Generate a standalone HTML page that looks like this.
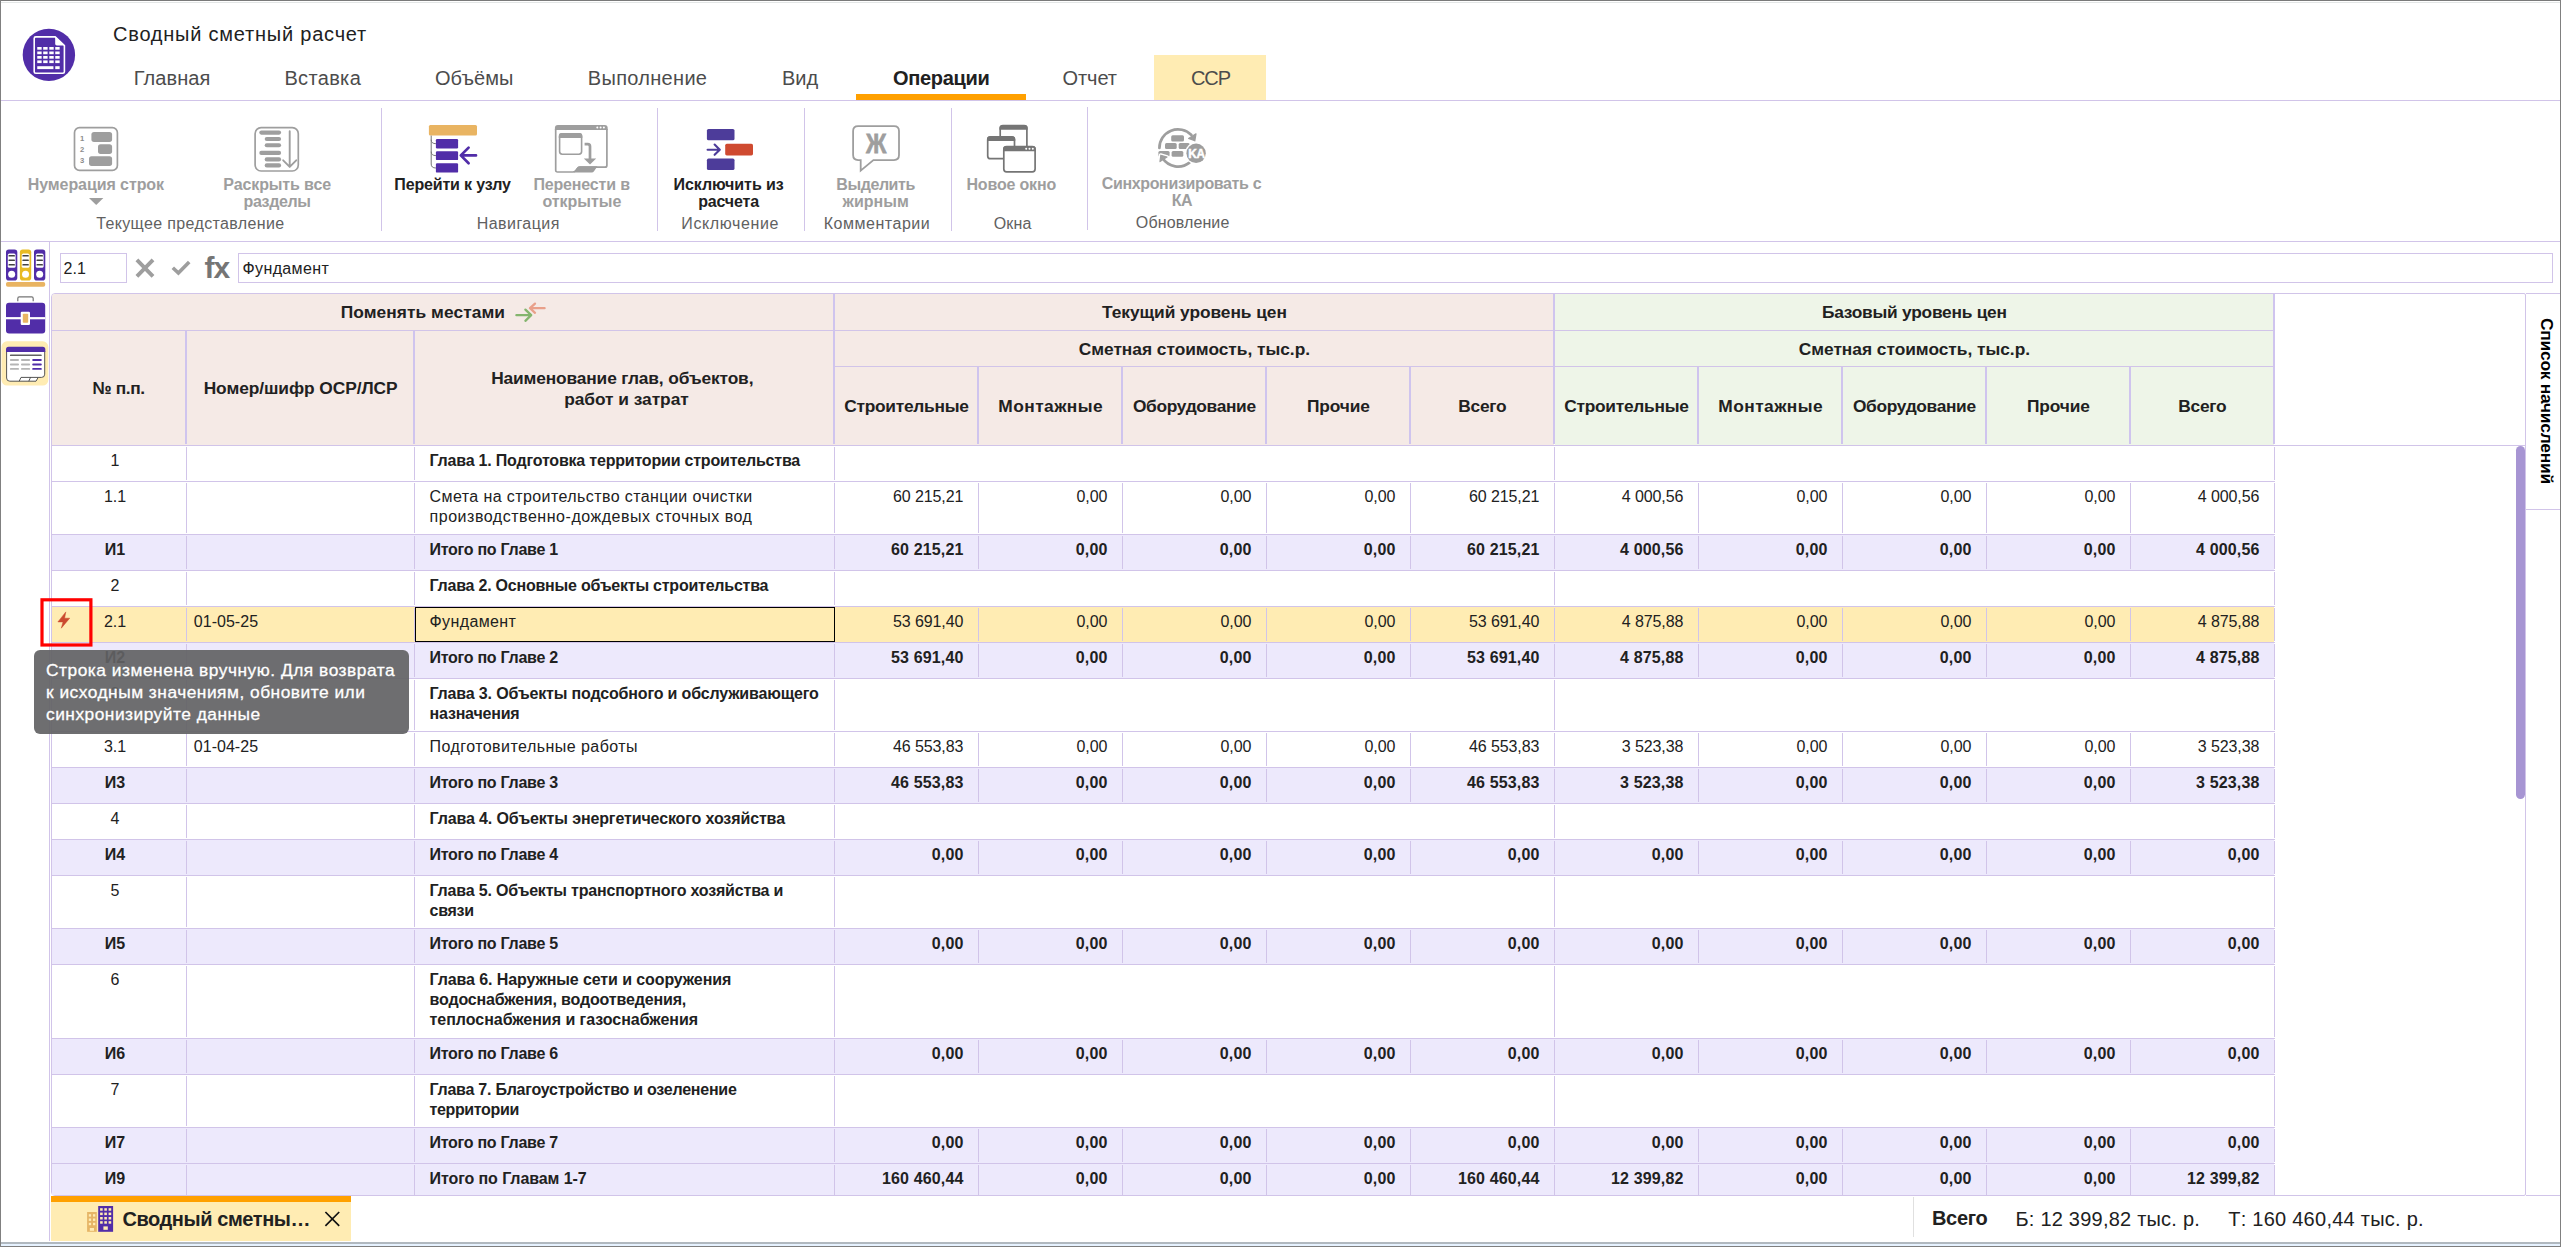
<!DOCTYPE html>
<html lang="ru"><head><meta charset="utf-8"><title>Сводный сметный расчет</title>
<style>
html,body{margin:0;padding:0;background:#fff;}
body{width:2561px;height:1247px;position:relative;overflow:hidden;font-family:"Liberation Sans",sans-serif;color:#212121;}
.b{position:absolute;box-sizing:border-box;display:block;}
.t{position:absolute;white-space:pre;display:block;}
</style></head><body>
<div class="b" style="left:0px;top:0px;width:2561px;height:1px;background:#7a7a7a;"></div>
<div class="b" style="left:0px;top:2px;width:2561px;height:1px;background:#e3e6e6;"></div>
<div class="b" style="left:0px;top:1242px;width:2561px;height:2px;background:#b0b8bf;"></div>
<div class="b" style="left:0px;top:1244px;width:2561px;height:2px;background:#e6f2ff;"></div>
<div class="b" style="left:0px;top:1246px;width:2561px;height:1px;background:#7f7f7f;"></div>
<div class="b" style="left:0px;top:0px;width:1px;height:1247px;background:#808080;"></div>
<div class="b" style="left:2560px;top:0px;width:1px;height:1247px;background:#808080;"></div>
<svg class="b" style="left:21.8px;top:28px;" width="54" height="54" viewBox="0 0 54 54"><circle cx="26.9" cy="26.9" r="26.2" fill="#512da8"/>
<path d="M13.8 8.9 h19.4 l9.2 8.6 v26.2 a1.6 1.6 0 0 1 -1.6 1.6 h-27 a1.6 1.6 0 0 1 -1.6 -1.6 v-33.2 a1.6 1.6 0 0 1 1.6 -1.6 z" fill="#512da8" stroke="#fff" stroke-width="1.6" stroke-linejoin="round"/>
<path d="M33.2 8.4 v7.4 a1.6 1.6 0 0 0 1.6 1.6 h8 z" fill="#fff"/>
<rect x="15.25" y="19.0" width="4.4" height="2.7" fill="#fff"/><rect x="21.2" y="19.0" width="4.4" height="2.7" fill="#fff"/><rect x="27.3" y="19.0" width="4.4" height="2.7" fill="#fff"/><rect x="33.25" y="19.0" width="4.4" height="2.7" fill="#fff"/><rect x="15.25" y="23.5" width="4.4" height="2.7" fill="#fff"/><rect x="21.2" y="23.5" width="4.4" height="2.7" fill="#fff"/><rect x="27.3" y="23.5" width="4.4" height="2.7" fill="#fff"/><rect x="33.25" y="23.5" width="4.4" height="2.7" fill="#fff"/><rect x="15.25" y="28.0" width="4.4" height="2.7" fill="#fff"/><rect x="21.2" y="28.0" width="4.4" height="2.7" fill="#fff"/><rect x="27.3" y="28.0" width="4.4" height="2.7" fill="#fff"/><rect x="33.25" y="28.0" width="4.4" height="2.7" fill="#fff"/><rect x="15.25" y="32.4" width="4.4" height="2.7" fill="#fff"/><rect x="21.2" y="32.4" width="4.4" height="2.7" fill="#fff"/><rect x="27.3" y="32.4" width="4.4" height="2.7" fill="#fff"/><rect x="33.25" y="32.4" width="4.4" height="2.7" fill="#fff"/><rect x="15.25" y="38.2" width="16.2" height="2.9" fill="#fff"/><rect x="33.25" y="38.2" width="4.4" height="2.9" fill="#fff"/></svg>
<span class="t" style="left:113.00px;top:22px;font-size:20px;line-height:25px;letter-spacing:0.776px;">Сводный сметный расчет</span>
<div class="b" style="left:1154px;top:55px;width:112px;height:45px;background:#ffecb3;"></div>
<div class="b" style="left:856px;top:94px;width:170px;height:6px;background:#ffa000;"></div>
<span class="t" style="left:133.70px;top:66px;font-size:20px;line-height:25px;color:#4c4c4c;letter-spacing:0.096px;">Главная</span>
<span class="t" style="left:284.40px;top:66px;font-size:20px;line-height:25px;color:#4c4c4c;letter-spacing:0.337px;">Вставка</span>
<span class="t" style="left:434.90px;top:66px;font-size:20px;line-height:25px;color:#4c4c4c;letter-spacing:0.098px;">Объёмы</span>
<span class="t" style="left:587.80px;top:66px;font-size:20px;line-height:25px;color:#4c4c4c;letter-spacing:0.309px;">Выполнение</span>
<span class="t" style="left:782.00px;top:66px;font-size:20px;line-height:25px;color:#4c4c4c;letter-spacing:0.004px;">Вид</span>
<span class="t" style="left:892.90px;top:66px;font-size:20px;line-height:25px;font-weight:700;letter-spacing:-0.286px;">Операции</span>
<span class="t" style="left:1062.40px;top:66px;font-size:20px;line-height:25px;color:#4c4c4c;letter-spacing:-0.033px;">Отчет</span>
<span class="t" style="left:1191.00px;top:66px;font-size:20px;line-height:25px;color:#4c4c4c;letter-spacing:-1.078px;">ССР</span>
<div class="b" style="left:1px;top:100px;width:2559px;height:1px;background:#d1c4e9;"></div>
<svg class="b" style="left:0px;top:100px;" width="1300" height="145" viewBox="0 100 1300 145"><rect x="74.5" y="127.7" width="42.9" height="42.7" rx="5" fill="none" stroke="#9e9e9e" stroke-width="1.7"/><rect x="91.4" y="132" width="20.7" height="9.9" rx="2.6" fill="#9e9e9e"/><rect x="98" y="144.2" width="14.1" height="9.7" rx="2.6" fill="#9e9e9e"/><rect x="89" y="156.2" width="23.1" height="9.7" rx="2.6" fill="#9e9e9e"/><text x="82" y="140.9" font-size="7.6" font-weight="700" text-anchor="middle" fill="#8c8c8c" font-family="Liberation Sans, sans-serif">1</text><text x="82" y="152" font-size="7.6" font-weight="700" text-anchor="middle" fill="#8c8c8c" font-family="Liberation Sans, sans-serif">2</text><text x="82" y="163.3" font-size="7.6" font-weight="700" text-anchor="middle" fill="#8c8c8c" font-family="Liberation Sans, sans-serif">3</text><rect x="255.1" y="127.7" width="43.2" height="43.3" rx="6" fill="none" stroke="#9e9e9e" stroke-width="1.7"/><rect x="259.3" y="130.54999999999998" width="21.8" height="4.1" rx="2.05" fill="#9e9e9e"/><rect x="264.7" y="136.95" width="16.4" height="4.1" rx="2.05" fill="#9e9e9e"/><rect x="264.7" y="143.25" width="16.4" height="4.1" rx="2.05" fill="#9e9e9e"/><rect x="259.3" y="150.85" width="21.8" height="4.1" rx="2.05" fill="#9e9e9e"/><rect x="264.7" y="157.35" width="16.4" height="4.1" rx="2.05" fill="#9e9e9e"/><rect x="264.7" y="163.35" width="16.4" height="4.1" rx="2.05" fill="#9e9e9e"/><path d="M289.7 131.2 V166.6 M283.2 160.3 L289.7 166.9 L296.2 160.3" fill="none" stroke="#9e9e9e" stroke-width="1.9" stroke-linecap="round" stroke-linejoin="round"/><rect x="428.9" y="125" width="48.1" height="10.6" rx="1.5" fill="#e9b462"/><path d="M431.2 135.6 V164 Q431.2 168 435.9 168 M431.2 139.7 Q431.2 143.7 435.9 143.7 M431.2 151.6 Q431.2 155.6 435.9 155.6" fill="none" stroke="#757575" stroke-width="1"/><rect x="435.9" y="139" width="22.2" height="9.4" rx="1.2" fill="#512da8"/><rect x="435.9" y="151.2" width="22.2" height="8.9" rx="1.2" fill="#512da8"/><rect x="435.9" y="163.3" width="22.2" height="9.3" rx="1.2" fill="#512da8"/><path d="M462 155.4 H476 M468.6 147.6 L460.8 155.4 L468.6 163.2" fill="none" stroke="#512da8" stroke-width="2.7" stroke-linecap="round" stroke-linejoin="round"/><path d="M555.7 129 V170 Q555.6 172 557.6 172 H573 Q575 172 576 170.6 L577.4 168.6 Q578.4 167.2 580.4 167.2 H605 Q606.9 167.2 606.9 165.2 V129" fill="none" stroke="#9e9e9e" stroke-width="1.7"/><path d="M554.9 129.9 V128 Q554.9 125 557.9 125 H604.7 Q607.7 125 607.7 128 V129.9 Z" fill="#9e9e9e"/><circle cx="597.3" cy="127.6" r="1" fill="#fff"/><circle cx="600.6" cy="127.6" r="1" fill="#fff"/><circle cx="603.9" cy="127.6" r="1" fill="#fff"/><path d="M573.5 172.4 L577.6 167 Q578.2 166.3 579.2 166.3 H597.5 L594 171.2 Q593.2 172.4 591.8 172.4 Z" fill="#9e9e9e"/><rect x="559.6" y="133.9" width="22" height="20.3" rx="2.6" fill="none" stroke="#9e9e9e" stroke-width="1.6"/><path d="M558.8 138 V136 Q558.8 133.1 561.7 133.1 H579.4 Q582.3 133.1 582.3 136 V138 Z" fill="#9e9e9e"/><path d="M584.6 144.2 H587.8 Q590 144.2 590 146.4 V159" fill="none" stroke="#9e9e9e" stroke-width="2.7"/><path d="M583.8 158.6 H596.2 L590 164.6 Z" fill="#9e9e9e"/><rect x="706.9" y="128.9" width="27.6" height="11.4" rx="1.6" fill="#4d3c9a"/><rect x="706.9" y="158.6" width="27.6" height="11.4" rx="1.6" fill="#4d3c9a"/><rect x="725.2" y="143.7" width="27.8" height="11.7" rx="1.6" fill="#cf4a30"/><path d="M707.6 149.7 H719 M714.6 144.6 L719.8 149.7 L714.6 154.8" fill="none" stroke="#4d3c9a" stroke-width="2.1" stroke-linecap="round" stroke-linejoin="round"/><path d="M858.1 126.1 H894 Q899 126.1 899 131.1 V155.1 Q899 160.1 894 160.1 H873.4 L860.7 170.6 V160.1 H858.1 Q853.1 160.1 853.1 155.1 V131.1 Q853.1 126.1 858.1 126.1 Z" fill="none" stroke="#9e9e9e" stroke-width="1.8" stroke-linejoin="miter"/><text transform="translate(876.1 152.8) scale(0.9 1.08)" x="0" y="0" font-size="25" font-weight="700" text-anchor="middle" fill="#9e9e9e" stroke="#9e9e9e" stroke-width="0.7" font-family="Liberation Sans, sans-serif">Ж</text><rect x="1000.2" y="125.7" width="26.7" height="23.6" rx="2.8" fill="#fff" stroke="#757575" stroke-width="1.7"/><path d="M999.5 129.8 V128 Q999.5 125 1002.5 125 H1024.6 Q1027.6 125 1027.6 128 V129.8 Z" fill="#757575"/><rect x="987.7" y="136.89999999999998" width="26.8" height="21.8" rx="2.8" fill="#fff" stroke="#757575" stroke-width="1.7"/><path d="M987 141 V139.2 Q987 136.2 990 136.2 H1012.2 Q1015.2 136.2 1015.2 139.2 V141 Z" fill="#757575"/><rect x="1003.8000000000001" y="146.7" width="31.3" height="25.2" rx="2.8" fill="#fff" stroke="#757575" stroke-width="1.7"/><path d="M1003.1 151.2 V149 Q1003.1 146 1006.1 146 H1032.8 Q1035.8 146 1035.8 149 V151.2 Z" fill="#757575"/><circle cx="1026.2" cy="148.7" r="1" fill="#fff"/><circle cx="1029.5" cy="148.7" r="1" fill="#fff"/><circle cx="1032.8" cy="148.7" r="1" fill="#fff"/><rect x="1171.2" y="135.2" width="12.8" height="6.2" rx="1.5" fill="#9e9e9e"/><rect x="1165" y="143.1" width="11.7" height="6.0" rx="1.5" fill="#9e9e9e"/><rect x="1178.7" y="143.1" width="11.0" height="6.0" rx="1.5" fill="#9e9e9e"/><rect x="1171.6" y="151.1" width="11.7" height="5.7" rx="1.5" fill="#9e9e9e"/><rect x="1158.4" y="150.9" width="11.2" height="5.7" rx="1.5" fill="#9e9e9e"/><path d="M1159.4 147.9 A18.6 18.6 0 0 1 1191.4 135.0" fill="none" stroke="#9e9e9e" stroke-width="2.7" stroke-linecap="round"/><path d="M1188.6 138.4 L1196 133.8 L1194.8 140.8 Z" fill="#9e9e9e" stroke="#9e9e9e" stroke-width="1.2" stroke-linejoin="round"/><path d="M1160.6 155 L1167.2 157 L1159.9 161.8 Z" fill="#fff" stroke="#fff" stroke-width="3.6" stroke-linejoin="round"/><path d="M1189.5 162.6 A18.6 18.6 0 0 1 1162.6 158.3" fill="none" stroke="#9e9e9e" stroke-width="2.7" stroke-linecap="round"/><path d="M1160.8 155.2 L1167 157.1 L1160 161.6 Z" fill="#9e9e9e" stroke="#9e9e9e" stroke-width="1.2" stroke-linejoin="round"/><circle cx="1196.1" cy="153.3" r="11" fill="#fff"/><circle cx="1196.1" cy="153.3" r="9.7" fill="#9e9e9e"/><text x="1196.4" y="157.5" font-size="11.9" font-weight="700" text-anchor="middle" fill="#fff" stroke="#fff" stroke-width="0.45" font-family="Liberation Sans, sans-serif" letter-spacing="-0.5">KA</text><path d="M89 198 H103.4 L96.2 205 Z" fill="#9e9e9e"/></svg>
<span class="t" style="left:27.76px;top:175px;font-size:16px;line-height:20px;font-weight:700;color:#9e9e9e;letter-spacing:-0.079px;">Нумерация строк</span>
<span class="t" style="left:223.34px;top:175px;font-size:16px;line-height:20px;font-weight:700;color:#9e9e9e;letter-spacing:-0.114px;">Раскрыть все</span>
<span class="t" style="left:243.51px;top:192px;font-size:16px;line-height:20px;font-weight:700;color:#9e9e9e;letter-spacing:-0.372px;">разделы</span>
<span class="t" style="left:96.18px;top:214px;font-size:16px;line-height:20px;color:#616161;letter-spacing:0.361px;">Текущее представление</span>
<span class="t" style="left:394.32px;top:175px;font-size:16px;line-height:20px;font-weight:700;letter-spacing:-0.162px;">Перейти к узлу</span>
<span class="t" style="left:533.41px;top:175px;font-size:16px;line-height:20px;font-weight:700;color:#9e9e9e;letter-spacing:-0.171px;">Перенести в</span>
<span class="t" style="left:542.39px;top:192px;font-size:16px;line-height:20px;font-weight:700;color:#9e9e9e;letter-spacing:-0.020px;">открытые</span>
<span class="t" style="left:476.73px;top:214px;font-size:16px;line-height:20px;color:#616161;letter-spacing:0.450px;">Навигация</span>
<span class="t" style="left:673.57px;top:175px;font-size:16px;line-height:20px;font-weight:700;letter-spacing:-0.055px;">Исключить из</span>
<span class="t" style="left:698.13px;top:192px;font-size:16px;line-height:20px;font-weight:700;letter-spacing:-0.139px;">расчета</span>
<span class="t" style="left:681.31px;top:214px;font-size:16px;line-height:20px;color:#616161;letter-spacing:0.612px;">Исключение</span>
<span class="t" style="left:836.29px;top:175px;font-size:16px;line-height:20px;font-weight:700;color:#9e9e9e;letter-spacing:-0.419px;">Выделить</span>
<span class="t" style="left:842.52px;top:192px;font-size:16px;line-height:20px;font-weight:700;color:#9e9e9e;letter-spacing:0.046px;">жирным</span>
<span class="t" style="left:823.66px;top:214px;font-size:16px;line-height:20px;color:#616161;letter-spacing:0.529px;">Комментарии</span>
<span class="t" style="left:966.51px;top:175px;font-size:16px;line-height:20px;font-weight:700;color:#9e9e9e;letter-spacing:-0.180px;">Новое окно</span>
<span class="t" style="left:993.78px;top:214px;font-size:16px;line-height:20px;color:#616161;letter-spacing:0.153px;">Окна</span>
<span class="t" style="left:1101.72px;top:174px;font-size:16px;line-height:20px;font-weight:700;color:#9e9e9e;letter-spacing:-0.354px;">Синхронизировать с</span>
<span class="t" style="left:1171.64px;top:191px;font-size:16px;line-height:20px;font-weight:700;color:#9e9e9e;letter-spacing:-0.514px;">КА</span>
<span class="t" style="left:1135.86px;top:213px;font-size:16px;line-height:20px;color:#616161;letter-spacing:0.121px;">Обновление</span>
<div class="b" style="left:381px;top:108px;width:1px;height:123px;background:#d1c4e9;"></div>
<div class="b" style="left:657px;top:108px;width:1px;height:123px;background:#d1c4e9;"></div>
<div class="b" style="left:804px;top:108px;width:1px;height:123px;background:#d1c4e9;"></div>
<div class="b" style="left:951px;top:108px;width:1px;height:123px;background:#d1c4e9;"></div>
<div class="b" style="left:1087px;top:107px;width:1px;height:123px;background:#d1c4e9;"></div>
<div class="b" style="left:1px;top:241px;width:2559px;height:1px;background:#d1c4e9;"></div>
<div class="b" style="left:49px;top:242px;width:1px;height:999px;background:#d1c4e9;"></div>
<svg class="b" style="left:0px;top:242px;" width="50" height="150" viewBox="0 242 50 150"><rect x="6.0" y="249.4" width="11.3" height="31.2" rx="2.8" fill="#512da8"/><rect x="7.8" y="253.4" width="7.8" height="14.4" rx="1.6" fill="#fff"/><rect x="8.5" y="255.0" width="6.4" height="1.6" rx="0.4" fill="#424242"/><rect x="8.5" y="259.5" width="6.4" height="1.6" rx="0.4" fill="#424242"/><rect x="8.5" y="264.0" width="6.4" height="1.6" rx="0.4" fill="#424242"/><circle cx="11.65" cy="274.3" r="3.5" fill="#fff"/><rect x="19.9" y="249.4" width="11.3" height="31.2" rx="2.8" fill="#e8bb24"/><rect x="21.7" y="253.4" width="7.8" height="14.4" rx="1.6" fill="#fff"/><rect x="22.4" y="255.0" width="6.4" height="1.6" rx="0.4" fill="#424242"/><rect x="22.4" y="259.5" width="6.4" height="1.6" rx="0.4" fill="#424242"/><rect x="22.4" y="264.0" width="6.4" height="1.6" rx="0.4" fill="#424242"/><circle cx="25.549999999999997" cy="274.3" r="3.5" fill="#fff"/><rect x="34.0" y="249.4" width="11.3" height="31.2" rx="2.8" fill="#512da8"/><rect x="35.8" y="253.4" width="7.8" height="14.4" rx="1.6" fill="#fff"/><rect x="36.5" y="255.0" width="6.4" height="1.6" rx="0.4" fill="#424242"/><rect x="36.5" y="259.5" width="6.4" height="1.6" rx="0.4" fill="#424242"/><rect x="36.5" y="264.0" width="6.4" height="1.6" rx="0.4" fill="#424242"/><circle cx="39.65" cy="274.3" r="3.5" fill="#fff"/><rect x="6" y="282" width="39.2" height="4.8" rx="1.8" fill="#e9b462"/><path d="M17.8 301.2 V298.4 Q17.8 296.9 19.3 296.9 H31.7 Q33.2 296.9 33.2 298.4 V301.2" fill="none" stroke="#757575" stroke-width="1.2"/><rect x="6" y="302.7" width="39.2" height="30.9" rx="3" fill="#512da8"/><rect x="6" y="317.1" width="39.2" height="2.2" fill="#fff"/><rect x="20.7" y="311.7" width="9.3" height="13.3" rx="1.2" fill="#fff"/><rect x="22.8" y="313.8" width="5.4" height="9" rx="0.8" fill="#e9b462"/><rect x="1.5" y="341.3" width="46.8" height="44.2" rx="5.5" fill="#ffecb3"/><path d="M6.6 351 V378 Q6.6 381.2 9.8 381.2 H36 L38.2 377.4 H41.6 Q44.7 377.4 44.7 374.2 V351 Z" fill="#fff" stroke="#424242" stroke-width="0.9" stroke-linejoin="round"/><path d="M19.2 381.2 L21 377.4 H38.2 M28.8 381.2 L30.5 377.4" fill="none" stroke="#424242" stroke-width="0.9"/><path d="M6 352 V349.4 Q6 346.8 8.6 346.8 H42.7 Q45.3 346.8 45.3 349.4 V352 Z" fill="#512da8"/><rect x="9.9" y="354.4" width="31.9" height="1.7" rx="0.85" fill="#616161"/><rect x="9.9" y="359.1" width="9.1" height="1.9" rx="0.9" fill="#b5b5b5"/><rect x="21" y="359.1" width="9.1" height="1.9" rx="0.9" fill="#b5b5b5"/><rect x="32.2" y="359.1" width="9.6" height="1.9" rx="0.9" fill="#512da8"/><rect x="9.9" y="363.5" width="9.1" height="1.9" rx="0.9" fill="#b5b5b5"/><rect x="21" y="363.5" width="9.1" height="1.9" rx="0.9" fill="#b5b5b5"/><rect x="32.2" y="363.5" width="9.6" height="1.9" rx="0.9" fill="#512da8"/><rect x="9.9" y="367.9" width="9.1" height="1.9" rx="0.9" fill="#b5b5b5"/><rect x="21" y="367.9" width="9.1" height="1.9" rx="0.9" fill="#b5b5b5"/><rect x="32.2" y="367.9" width="9.6" height="1.9" rx="0.9" fill="#512da8"/></svg>
<div class="b" style="left:60px;top:253px;width:67px;height:30px;border:1px solid #d1c4e9;"></div>
<div class="b" style="left:238px;top:253px;width:2315px;height:30px;border:1px solid #d1c4e9;"></div>
<span class="t" style="left:63.60px;top:259px;font-size:16px;line-height:20px;">2.1</span>
<span class="t" style="left:242.50px;top:259px;font-size:16px;line-height:20px;letter-spacing:0.378px;">Фундамент</span>
<svg class="b" style="left:130px;top:250px;" width="110" height="36" viewBox="130 250 110 36"><path d="M136.9 259.9 L153 276.4 M153 259.9 L136.9 276.4" stroke="#9e9e9e" stroke-width="3.9" fill="none"/><path d="M172.8 267.8 L178.4 273 L189.2 262" stroke="#9e9e9e" stroke-width="3.6" fill="none"/></svg>
<span class="t" style="left:204.60px;top:249px;font-size:30px;line-height:38px;font-weight:700;color:#757575;letter-spacing:-1.144px;">fx</span>
<div class="b" style="left:51px;top:293px;width:2475px;height:903px;border:1px solid #d1c4e9;border-radius:4px 2px 2px 4px;"></div>
<div class="b" style="left:0;top:0;width:2561px;height:1247px;"><div class="b" style="left:52px;top:294px;width:1502px;height:151px;background:#f5eae6;border-top-left-radius:3px;"></div><div class="b" style="left:1555px;top:294px;width:719px;height:151px;background:#eef5e8;"></div><div class="b" style="left:52px;top:330px;width:2223px;height:1px;background:#d1c4e9;"></div><div class="b" style="left:834px;top:366px;width:1441px;height:1px;background:#d1c4e9;"></div><div class="b" style="left:185px;top:331px;width:2px;height:113px;background:#cfc4ee;"></div><div class="b" style="left:413px;top:331px;width:2px;height:113px;background:#cfc4ee;"></div><div class="b" style="left:833px;top:294px;width:2px;height:150px;background:#cfc4ee;"></div><div class="b" style="left:1553px;top:294px;width:2px;height:150px;background:#cfc4ee;"></div><div class="b" style="left:2273px;top:294px;width:2px;height:150px;background:#cfc4ee;"></div><div class="b" style="left:977px;top:367px;width:2px;height:77px;background:#cfc4ee;"></div><div class="b" style="left:1121px;top:367px;width:2px;height:77px;background:#cfc4ee;"></div><div class="b" style="left:1265px;top:367px;width:2px;height:77px;background:#cfc4ee;"></div><div class="b" style="left:1409px;top:367px;width:2px;height:77px;background:#cfc4ee;"></div><div class="b" style="left:1697px;top:367px;width:2px;height:77px;background:#cfc4ee;"></div><div class="b" style="left:1841px;top:367px;width:2px;height:77px;background:#cfc4ee;"></div><div class="b" style="left:1985px;top:367px;width:2px;height:77px;background:#cfc4ee;"></div><div class="b" style="left:2129px;top:367px;width:2px;height:77px;background:#cfc4ee;"></div><div class="b" style="left:52px;top:445px;width:2473px;height:1px;background:#d1c4e9;"></div><span class="t" style="left:340.80px;top:301px;font-size:17.33px;line-height:22px;font-weight:700;letter-spacing:0.058px;">Поменять местами</span><span class="t" style="left:1102.12px;top:301px;font-size:17.33px;line-height:22px;font-weight:700;letter-spacing:-0.055px;">Текущий уровень цен</span><span class="t" style="left:1822.03px;top:301px;font-size:17.33px;line-height:22px;font-weight:700;letter-spacing:-0.244px;">Базовый уровень цен</span><span class="t" style="left:1078.74px;top:338px;font-size:17.33px;line-height:22px;font-weight:700;letter-spacing:-0.025px;">Сметная стоимость, тыс.р.</span><span class="t" style="left:1798.74px;top:338px;font-size:17.33px;line-height:22px;font-weight:700;letter-spacing:-0.025px;">Сметная стоимость, тыс.р.</span><span class="t" style="left:844.17px;top:395px;font-size:17.33px;line-height:22px;font-weight:700;letter-spacing:-0.260px;">Строительные</span><span class="t" style="left:998.37px;top:395px;font-size:17.33px;line-height:22px;font-weight:700;letter-spacing:0.434px;">Монтажные</span><span class="t" style="left:1132.94px;top:395px;font-size:17.33px;line-height:22px;font-weight:700;letter-spacing:-0.328px;">Оборудование</span><span class="t" style="left:1307.04px;top:395px;font-size:17.33px;line-height:22px;font-weight:700;letter-spacing:-0.124px;">Прочие</span><span class="t" style="left:1458.32px;top:395px;font-size:17.33px;line-height:22px;font-weight:700;letter-spacing:-0.255px;">Всего</span><span class="t" style="left:1564.17px;top:395px;font-size:17.33px;line-height:22px;font-weight:700;letter-spacing:-0.260px;">Строительные</span><span class="t" style="left:1718.37px;top:395px;font-size:17.33px;line-height:22px;font-weight:700;letter-spacing:0.434px;">Монтажные</span><span class="t" style="left:1852.94px;top:395px;font-size:17.33px;line-height:22px;font-weight:700;letter-spacing:-0.328px;">Оборудование</span><span class="t" style="left:2027.04px;top:395px;font-size:17.33px;line-height:22px;font-weight:700;letter-spacing:-0.124px;">Прочие</span><span class="t" style="left:2178.32px;top:395px;font-size:17.33px;line-height:22px;font-weight:700;letter-spacing:-0.255px;">Всего</span><span class="t" style="left:92.57px;top:377px;font-size:17.33px;line-height:22px;font-weight:700;letter-spacing:-0.451px;">№ п.п.</span><span class="t" style="left:203.67px;top:377px;font-size:17.33px;line-height:22px;font-weight:700;letter-spacing:-0.066px;">Номер/шифр ОСР/ЛСР</span><span class="t" style="left:491.13px;top:367px;font-size:17.33px;line-height:22px;font-weight:700;letter-spacing:-0.135px;">Наименование глав, объектов,</span><span class="t" style="left:564.18px;top:388px;font-size:17.33px;line-height:22px;font-weight:700;letter-spacing:-0.040px;">работ и затрат</span><svg class="b" style="left:510px;top:300px;" width="40" height="26" viewBox="510 300 40 26"><path d="M516.4 315.2 H530.6 M525.4 309.6 L531.2 315.2 L525.4 320.8" fill="none" stroke="#84b56e" stroke-width="2.3" stroke-linecap="round" stroke-linejoin="round"/><path d="M530.4 308.2 H544.6 M535 303.6 L530 308.2 L535 312.8" fill="none" stroke="#e9a08a" stroke-width="2.3" stroke-linecap="round" stroke-linejoin="round"/></svg><div class="b" style="left:52px;top:481px;width:2223px;height:1px;background:#d1c4e9;"></div><span class="t" style="left:110.55px;top:451px;font-size:16px;line-height:20px;">1</span><span class="t" style="left:429.50px;top:451px;font-size:16px;line-height:20px;font-weight:700;letter-spacing:-0.197px;">Глава 1. Подготовка территории строительства</span><div class="b" style="left:52px;top:534px;width:2223px;height:1px;background:#d1c4e9;"></div><span class="t" style="left:103.88px;top:487px;font-size:16px;line-height:20px;">1.1</span><span class="t" style="left:429.50px;top:487px;font-size:16px;line-height:20px;letter-spacing:0.413px;">Смета на строительство станции очистки</span><span class="t" style="left:429.50px;top:507px;font-size:16px;line-height:20px;letter-spacing:0.532px;">производственно-дождевых сточных вод</span><span class="t" style="left:893.01px;top:487px;font-size:16px;line-height:20px;letter-spacing:-0.100px;">60 215,21</span><span class="t" style="left:1076.56px;top:487px;font-size:16px;line-height:20px;letter-spacing:-0.100px;">0,00</span><span class="t" style="left:1220.56px;top:487px;font-size:16px;line-height:20px;letter-spacing:-0.100px;">0,00</span><span class="t" style="left:1364.56px;top:487px;font-size:16px;line-height:20px;letter-spacing:-0.100px;">0,00</span><span class="t" style="left:1469.01px;top:487px;font-size:16px;line-height:20px;letter-spacing:-0.100px;">60 215,21</span><span class="t" style="left:1621.82px;top:487px;font-size:16px;line-height:20px;letter-spacing:-0.100px;">4 000,56</span><span class="t" style="left:1796.56px;top:487px;font-size:16px;line-height:20px;letter-spacing:-0.100px;">0,00</span><span class="t" style="left:1940.56px;top:487px;font-size:16px;line-height:20px;letter-spacing:-0.100px;">0,00</span><span class="t" style="left:2084.56px;top:487px;font-size:16px;line-height:20px;letter-spacing:-0.100px;">0,00</span><span class="t" style="left:2197.82px;top:487px;font-size:16px;line-height:20px;letter-spacing:-0.100px;">4 000,56</span><div class="b" style="left:52px;top:535px;width:2222px;height:35px;background:#ede9fc;"></div><div class="b" style="left:52px;top:570px;width:2223px;height:1px;background:#d1c4e9;"></div><span class="t" style="left:104.75px;top:540px;font-size:16px;line-height:20px;font-weight:700;letter-spacing:0.100px;">И1</span><span class="t" style="left:429.50px;top:540px;font-size:16px;line-height:20px;font-weight:700;letter-spacing:-0.266px;">Итого по Главе 1</span><span class="t" style="left:891.01px;top:540px;font-size:16px;line-height:20px;font-weight:700;letter-spacing:0.150px;">60 215,21</span><span class="t" style="left:1075.81px;top:540px;font-size:16px;line-height:20px;font-weight:700;letter-spacing:0.150px;">0,00</span><span class="t" style="left:1219.81px;top:540px;font-size:16px;line-height:20px;font-weight:700;letter-spacing:0.150px;">0,00</span><span class="t" style="left:1363.81px;top:540px;font-size:16px;line-height:20px;font-weight:700;letter-spacing:0.150px;">0,00</span><span class="t" style="left:1467.01px;top:540px;font-size:16px;line-height:20px;font-weight:700;letter-spacing:0.150px;">60 215,21</span><span class="t" style="left:1620.07px;top:540px;font-size:16px;line-height:20px;font-weight:700;letter-spacing:0.150px;">4 000,56</span><span class="t" style="left:1795.81px;top:540px;font-size:16px;line-height:20px;font-weight:700;letter-spacing:0.150px;">0,00</span><span class="t" style="left:1939.81px;top:540px;font-size:16px;line-height:20px;font-weight:700;letter-spacing:0.150px;">0,00</span><span class="t" style="left:2083.81px;top:540px;font-size:16px;line-height:20px;font-weight:700;letter-spacing:0.150px;">0,00</span><span class="t" style="left:2196.07px;top:540px;font-size:16px;line-height:20px;font-weight:700;letter-spacing:0.150px;">4 000,56</span><div class="b" style="left:52px;top:606px;width:2223px;height:1px;background:#d1c4e9;"></div><span class="t" style="left:110.55px;top:576px;font-size:16px;line-height:20px;">2</span><span class="t" style="left:429.50px;top:576px;font-size:16px;line-height:20px;font-weight:700;letter-spacing:-0.222px;">Глава 2. Основные объекты строительства</span><div class="b" style="left:52px;top:607px;width:2222px;height:35px;background:#ffecb3;"></div><div class="b" style="left:52px;top:642px;width:2223px;height:1px;background:#d1c4e9;"></div><span class="t" style="left:103.88px;top:612px;font-size:16px;line-height:20px;">2.1</span><span class="t" style="left:193.80px;top:612px;font-size:16px;line-height:20px;letter-spacing:0.030px;">01-05-25</span><span class="t" style="left:429.50px;top:612px;font-size:16px;line-height:20px;letter-spacing:0.389px;">Фундамент</span><span class="t" style="left:893.01px;top:612px;font-size:16px;line-height:20px;letter-spacing:-0.100px;">53 691,40</span><span class="t" style="left:1076.56px;top:612px;font-size:16px;line-height:20px;letter-spacing:-0.100px;">0,00</span><span class="t" style="left:1220.56px;top:612px;font-size:16px;line-height:20px;letter-spacing:-0.100px;">0,00</span><span class="t" style="left:1364.56px;top:612px;font-size:16px;line-height:20px;letter-spacing:-0.100px;">0,00</span><span class="t" style="left:1469.01px;top:612px;font-size:16px;line-height:20px;letter-spacing:-0.100px;">53 691,40</span><span class="t" style="left:1621.82px;top:612px;font-size:16px;line-height:20px;letter-spacing:-0.100px;">4 875,88</span><span class="t" style="left:1796.56px;top:612px;font-size:16px;line-height:20px;letter-spacing:-0.100px;">0,00</span><span class="t" style="left:1940.56px;top:612px;font-size:16px;line-height:20px;letter-spacing:-0.100px;">0,00</span><span class="t" style="left:2084.56px;top:612px;font-size:16px;line-height:20px;letter-spacing:-0.100px;">0,00</span><span class="t" style="left:2197.82px;top:612px;font-size:16px;line-height:20px;letter-spacing:-0.100px;">4 875,88</span><div class="b" style="left:52px;top:643px;width:2222px;height:35px;background:#ede9fc;"></div><div class="b" style="left:52px;top:678px;width:2223px;height:1px;background:#d1c4e9;"></div><span class="t" style="left:104.75px;top:648px;font-size:16px;line-height:20px;font-weight:700;letter-spacing:0.100px;">И2</span><span class="t" style="left:429.50px;top:648px;font-size:16px;line-height:20px;font-weight:700;letter-spacing:-0.266px;">Итого по Главе 2</span><span class="t" style="left:891.01px;top:648px;font-size:16px;line-height:20px;font-weight:700;letter-spacing:0.150px;">53 691,40</span><span class="t" style="left:1075.81px;top:648px;font-size:16px;line-height:20px;font-weight:700;letter-spacing:0.150px;">0,00</span><span class="t" style="left:1219.81px;top:648px;font-size:16px;line-height:20px;font-weight:700;letter-spacing:0.150px;">0,00</span><span class="t" style="left:1363.81px;top:648px;font-size:16px;line-height:20px;font-weight:700;letter-spacing:0.150px;">0,00</span><span class="t" style="left:1467.01px;top:648px;font-size:16px;line-height:20px;font-weight:700;letter-spacing:0.150px;">53 691,40</span><span class="t" style="left:1620.07px;top:648px;font-size:16px;line-height:20px;font-weight:700;letter-spacing:0.150px;">4 875,88</span><span class="t" style="left:1795.81px;top:648px;font-size:16px;line-height:20px;font-weight:700;letter-spacing:0.150px;">0,00</span><span class="t" style="left:1939.81px;top:648px;font-size:16px;line-height:20px;font-weight:700;letter-spacing:0.150px;">0,00</span><span class="t" style="left:2083.81px;top:648px;font-size:16px;line-height:20px;font-weight:700;letter-spacing:0.150px;">0,00</span><span class="t" style="left:2196.07px;top:648px;font-size:16px;line-height:20px;font-weight:700;letter-spacing:0.150px;">4 875,88</span><div class="b" style="left:52px;top:731px;width:2223px;height:1px;background:#d1c4e9;"></div><span class="t" style="left:110.55px;top:684px;font-size:16px;line-height:20px;">3</span><span class="t" style="left:429.50px;top:684px;font-size:16px;line-height:20px;font-weight:700;letter-spacing:-0.160px;">Глава 3. Объекты подсобного и обслуживающего</span><span class="t" style="left:429.50px;top:704px;font-size:16px;line-height:20px;font-weight:700;letter-spacing:-0.191px;">назначения</span><div class="b" style="left:52px;top:767px;width:2223px;height:1px;background:#d1c4e9;"></div><span class="t" style="left:103.88px;top:737px;font-size:16px;line-height:20px;">3.1</span><span class="t" style="left:193.80px;top:737px;font-size:16px;line-height:20px;letter-spacing:0.030px;">01-04-25</span><span class="t" style="left:429.50px;top:737px;font-size:16px;line-height:20px;letter-spacing:0.452px;">Подготовительные работы</span><span class="t" style="left:893.01px;top:737px;font-size:16px;line-height:20px;letter-spacing:-0.100px;">46 553,83</span><span class="t" style="left:1076.56px;top:737px;font-size:16px;line-height:20px;letter-spacing:-0.100px;">0,00</span><span class="t" style="left:1220.56px;top:737px;font-size:16px;line-height:20px;letter-spacing:-0.100px;">0,00</span><span class="t" style="left:1364.56px;top:737px;font-size:16px;line-height:20px;letter-spacing:-0.100px;">0,00</span><span class="t" style="left:1469.01px;top:737px;font-size:16px;line-height:20px;letter-spacing:-0.100px;">46 553,83</span><span class="t" style="left:1621.82px;top:737px;font-size:16px;line-height:20px;letter-spacing:-0.100px;">3 523,38</span><span class="t" style="left:1796.56px;top:737px;font-size:16px;line-height:20px;letter-spacing:-0.100px;">0,00</span><span class="t" style="left:1940.56px;top:737px;font-size:16px;line-height:20px;letter-spacing:-0.100px;">0,00</span><span class="t" style="left:2084.56px;top:737px;font-size:16px;line-height:20px;letter-spacing:-0.100px;">0,00</span><span class="t" style="left:2197.82px;top:737px;font-size:16px;line-height:20px;letter-spacing:-0.100px;">3 523,38</span><div class="b" style="left:52px;top:768px;width:2222px;height:35px;background:#ede9fc;"></div><div class="b" style="left:52px;top:803px;width:2223px;height:1px;background:#d1c4e9;"></div><span class="t" style="left:104.75px;top:773px;font-size:16px;line-height:20px;font-weight:700;letter-spacing:0.100px;">И3</span><span class="t" style="left:429.50px;top:773px;font-size:16px;line-height:20px;font-weight:700;letter-spacing:-0.266px;">Итого по Главе 3</span><span class="t" style="left:891.01px;top:773px;font-size:16px;line-height:20px;font-weight:700;letter-spacing:0.150px;">46 553,83</span><span class="t" style="left:1075.81px;top:773px;font-size:16px;line-height:20px;font-weight:700;letter-spacing:0.150px;">0,00</span><span class="t" style="left:1219.81px;top:773px;font-size:16px;line-height:20px;font-weight:700;letter-spacing:0.150px;">0,00</span><span class="t" style="left:1363.81px;top:773px;font-size:16px;line-height:20px;font-weight:700;letter-spacing:0.150px;">0,00</span><span class="t" style="left:1467.01px;top:773px;font-size:16px;line-height:20px;font-weight:700;letter-spacing:0.150px;">46 553,83</span><span class="t" style="left:1620.07px;top:773px;font-size:16px;line-height:20px;font-weight:700;letter-spacing:0.150px;">3 523,38</span><span class="t" style="left:1795.81px;top:773px;font-size:16px;line-height:20px;font-weight:700;letter-spacing:0.150px;">0,00</span><span class="t" style="left:1939.81px;top:773px;font-size:16px;line-height:20px;font-weight:700;letter-spacing:0.150px;">0,00</span><span class="t" style="left:2083.81px;top:773px;font-size:16px;line-height:20px;font-weight:700;letter-spacing:0.150px;">0,00</span><span class="t" style="left:2196.07px;top:773px;font-size:16px;line-height:20px;font-weight:700;letter-spacing:0.150px;">3 523,38</span><div class="b" style="left:52px;top:839px;width:2223px;height:1px;background:#d1c4e9;"></div><span class="t" style="left:110.55px;top:809px;font-size:16px;line-height:20px;">4</span><span class="t" style="left:429.50px;top:809px;font-size:16px;line-height:20px;font-weight:700;letter-spacing:-0.121px;">Глава 4. Объекты энергетического хозяйства</span><div class="b" style="left:52px;top:840px;width:2222px;height:35px;background:#ede9fc;"></div><div class="b" style="left:52px;top:875px;width:2223px;height:1px;background:#d1c4e9;"></div><span class="t" style="left:104.75px;top:845px;font-size:16px;line-height:20px;font-weight:700;letter-spacing:0.100px;">И4</span><span class="t" style="left:429.50px;top:845px;font-size:16px;line-height:20px;font-weight:700;letter-spacing:-0.266px;">Итого по Главе 4</span><span class="t" style="left:931.81px;top:845px;font-size:16px;line-height:20px;font-weight:700;letter-spacing:0.150px;">0,00</span><span class="t" style="left:1075.81px;top:845px;font-size:16px;line-height:20px;font-weight:700;letter-spacing:0.150px;">0,00</span><span class="t" style="left:1219.81px;top:845px;font-size:16px;line-height:20px;font-weight:700;letter-spacing:0.150px;">0,00</span><span class="t" style="left:1363.81px;top:845px;font-size:16px;line-height:20px;font-weight:700;letter-spacing:0.150px;">0,00</span><span class="t" style="left:1507.81px;top:845px;font-size:16px;line-height:20px;font-weight:700;letter-spacing:0.150px;">0,00</span><span class="t" style="left:1651.81px;top:845px;font-size:16px;line-height:20px;font-weight:700;letter-spacing:0.150px;">0,00</span><span class="t" style="left:1795.81px;top:845px;font-size:16px;line-height:20px;font-weight:700;letter-spacing:0.150px;">0,00</span><span class="t" style="left:1939.81px;top:845px;font-size:16px;line-height:20px;font-weight:700;letter-spacing:0.150px;">0,00</span><span class="t" style="left:2083.81px;top:845px;font-size:16px;line-height:20px;font-weight:700;letter-spacing:0.150px;">0,00</span><span class="t" style="left:2227.81px;top:845px;font-size:16px;line-height:20px;font-weight:700;letter-spacing:0.150px;">0,00</span><div class="b" style="left:52px;top:928px;width:2223px;height:1px;background:#d1c4e9;"></div><span class="t" style="left:110.55px;top:881px;font-size:16px;line-height:20px;">5</span><span class="t" style="left:429.50px;top:881px;font-size:16px;line-height:20px;font-weight:700;letter-spacing:-0.185px;">Глава 5. Объекты транспортного хозяйства и</span><span class="t" style="left:429.50px;top:901px;font-size:16px;line-height:20px;font-weight:700;letter-spacing:-0.271px;">связи</span><div class="b" style="left:52px;top:929px;width:2222px;height:35px;background:#ede9fc;"></div><div class="b" style="left:52px;top:964px;width:2223px;height:1px;background:#d1c4e9;"></div><span class="t" style="left:104.75px;top:934px;font-size:16px;line-height:20px;font-weight:700;letter-spacing:0.100px;">И5</span><span class="t" style="left:429.50px;top:934px;font-size:16px;line-height:20px;font-weight:700;letter-spacing:-0.266px;">Итого по Главе 5</span><span class="t" style="left:931.81px;top:934px;font-size:16px;line-height:20px;font-weight:700;letter-spacing:0.150px;">0,00</span><span class="t" style="left:1075.81px;top:934px;font-size:16px;line-height:20px;font-weight:700;letter-spacing:0.150px;">0,00</span><span class="t" style="left:1219.81px;top:934px;font-size:16px;line-height:20px;font-weight:700;letter-spacing:0.150px;">0,00</span><span class="t" style="left:1363.81px;top:934px;font-size:16px;line-height:20px;font-weight:700;letter-spacing:0.150px;">0,00</span><span class="t" style="left:1507.81px;top:934px;font-size:16px;line-height:20px;font-weight:700;letter-spacing:0.150px;">0,00</span><span class="t" style="left:1651.81px;top:934px;font-size:16px;line-height:20px;font-weight:700;letter-spacing:0.150px;">0,00</span><span class="t" style="left:1795.81px;top:934px;font-size:16px;line-height:20px;font-weight:700;letter-spacing:0.150px;">0,00</span><span class="t" style="left:1939.81px;top:934px;font-size:16px;line-height:20px;font-weight:700;letter-spacing:0.150px;">0,00</span><span class="t" style="left:2083.81px;top:934px;font-size:16px;line-height:20px;font-weight:700;letter-spacing:0.150px;">0,00</span><span class="t" style="left:2227.81px;top:934px;font-size:16px;line-height:20px;font-weight:700;letter-spacing:0.150px;">0,00</span><div class="b" style="left:52px;top:1038px;width:2223px;height:1px;background:#d1c4e9;"></div><span class="t" style="left:110.55px;top:970px;font-size:16px;line-height:20px;">6</span><span class="t" style="left:429.50px;top:970px;font-size:16px;line-height:20px;font-weight:700;letter-spacing:-0.099px;">Глава 6. Наружные сети и сооружения</span><span class="t" style="left:429.50px;top:990px;font-size:16px;line-height:20px;font-weight:700;letter-spacing:-0.151px;">водоснабжения, водоотведения,</span><span class="t" style="left:429.50px;top:1010px;font-size:16px;line-height:20px;font-weight:700;letter-spacing:-0.031px;">теплоснабжения и газоснабжения</span><div class="b" style="left:52px;top:1039px;width:2222px;height:35px;background:#ede9fc;"></div><div class="b" style="left:52px;top:1074px;width:2223px;height:1px;background:#d1c4e9;"></div><span class="t" style="left:104.75px;top:1044px;font-size:16px;line-height:20px;font-weight:700;letter-spacing:0.100px;">И6</span><span class="t" style="left:429.50px;top:1044px;font-size:16px;line-height:20px;font-weight:700;letter-spacing:-0.266px;">Итого по Главе 6</span><span class="t" style="left:931.81px;top:1044px;font-size:16px;line-height:20px;font-weight:700;letter-spacing:0.150px;">0,00</span><span class="t" style="left:1075.81px;top:1044px;font-size:16px;line-height:20px;font-weight:700;letter-spacing:0.150px;">0,00</span><span class="t" style="left:1219.81px;top:1044px;font-size:16px;line-height:20px;font-weight:700;letter-spacing:0.150px;">0,00</span><span class="t" style="left:1363.81px;top:1044px;font-size:16px;line-height:20px;font-weight:700;letter-spacing:0.150px;">0,00</span><span class="t" style="left:1507.81px;top:1044px;font-size:16px;line-height:20px;font-weight:700;letter-spacing:0.150px;">0,00</span><span class="t" style="left:1651.81px;top:1044px;font-size:16px;line-height:20px;font-weight:700;letter-spacing:0.150px;">0,00</span><span class="t" style="left:1795.81px;top:1044px;font-size:16px;line-height:20px;font-weight:700;letter-spacing:0.150px;">0,00</span><span class="t" style="left:1939.81px;top:1044px;font-size:16px;line-height:20px;font-weight:700;letter-spacing:0.150px;">0,00</span><span class="t" style="left:2083.81px;top:1044px;font-size:16px;line-height:20px;font-weight:700;letter-spacing:0.150px;">0,00</span><span class="t" style="left:2227.81px;top:1044px;font-size:16px;line-height:20px;font-weight:700;letter-spacing:0.150px;">0,00</span><div class="b" style="left:52px;top:1127px;width:2223px;height:1px;background:#d1c4e9;"></div><span class="t" style="left:110.55px;top:1080px;font-size:16px;line-height:20px;">7</span><span class="t" style="left:429.50px;top:1080px;font-size:16px;line-height:20px;font-weight:700;letter-spacing:-0.245px;">Глава 7. Благоустройство и озеленение</span><span class="t" style="left:429.50px;top:1100px;font-size:16px;line-height:20px;font-weight:700;letter-spacing:-0.357px;">территории</span><div class="b" style="left:52px;top:1128px;width:2222px;height:35px;background:#ede9fc;"></div><div class="b" style="left:52px;top:1163px;width:2223px;height:1px;background:#d1c4e9;"></div><span class="t" style="left:104.75px;top:1133px;font-size:16px;line-height:20px;font-weight:700;letter-spacing:0.100px;">И7</span><span class="t" style="left:429.50px;top:1133px;font-size:16px;line-height:20px;font-weight:700;letter-spacing:-0.266px;">Итого по Главе 7</span><span class="t" style="left:931.81px;top:1133px;font-size:16px;line-height:20px;font-weight:700;letter-spacing:0.150px;">0,00</span><span class="t" style="left:1075.81px;top:1133px;font-size:16px;line-height:20px;font-weight:700;letter-spacing:0.150px;">0,00</span><span class="t" style="left:1219.81px;top:1133px;font-size:16px;line-height:20px;font-weight:700;letter-spacing:0.150px;">0,00</span><span class="t" style="left:1363.81px;top:1133px;font-size:16px;line-height:20px;font-weight:700;letter-spacing:0.150px;">0,00</span><span class="t" style="left:1507.81px;top:1133px;font-size:16px;line-height:20px;font-weight:700;letter-spacing:0.150px;">0,00</span><span class="t" style="left:1651.81px;top:1133px;font-size:16px;line-height:20px;font-weight:700;letter-spacing:0.150px;">0,00</span><span class="t" style="left:1795.81px;top:1133px;font-size:16px;line-height:20px;font-weight:700;letter-spacing:0.150px;">0,00</span><span class="t" style="left:1939.81px;top:1133px;font-size:16px;line-height:20px;font-weight:700;letter-spacing:0.150px;">0,00</span><span class="t" style="left:2083.81px;top:1133px;font-size:16px;line-height:20px;font-weight:700;letter-spacing:0.150px;">0,00</span><span class="t" style="left:2227.81px;top:1133px;font-size:16px;line-height:20px;font-weight:700;letter-spacing:0.150px;">0,00</span><div class="b" style="left:52px;top:1164px;width:2222px;height:31px;background:#ede9fc;"></div><span class="t" style="left:104.75px;top:1169px;font-size:16px;line-height:20px;font-weight:700;letter-spacing:0.100px;">И9</span><span class="t" style="left:429.50px;top:1169px;font-size:16px;line-height:20px;font-weight:700;letter-spacing:-0.090px;">Итого по Главам 1-7</span><span class="t" style="left:881.97px;top:1169px;font-size:16px;line-height:20px;font-weight:700;letter-spacing:0.150px;">160 460,44</span><span class="t" style="left:1075.81px;top:1169px;font-size:16px;line-height:20px;font-weight:700;letter-spacing:0.150px;">0,00</span><span class="t" style="left:1219.81px;top:1169px;font-size:16px;line-height:20px;font-weight:700;letter-spacing:0.150px;">0,00</span><span class="t" style="left:1363.81px;top:1169px;font-size:16px;line-height:20px;font-weight:700;letter-spacing:0.150px;">0,00</span><span class="t" style="left:1457.97px;top:1169px;font-size:16px;line-height:20px;font-weight:700;letter-spacing:0.150px;">160 460,44</span><span class="t" style="left:1611.01px;top:1169px;font-size:16px;line-height:20px;font-weight:700;letter-spacing:0.150px;">12 399,82</span><span class="t" style="left:1795.81px;top:1169px;font-size:16px;line-height:20px;font-weight:700;letter-spacing:0.150px;">0,00</span><span class="t" style="left:1939.81px;top:1169px;font-size:16px;line-height:20px;font-weight:700;letter-spacing:0.150px;">0,00</span><span class="t" style="left:2083.81px;top:1169px;font-size:16px;line-height:20px;font-weight:700;letter-spacing:0.150px;">0,00</span><span class="t" style="left:2187.01px;top:1169px;font-size:16px;line-height:20px;font-weight:700;letter-spacing:0.150px;">12 399,82</span><div class="b" style="left:186px;top:447px;width:1px;height:33px;background:#d1c4e9;"></div><div class="b" style="left:414px;top:447px;width:1px;height:33px;background:#d1c4e9;"></div><div class="b" style="left:834px;top:447px;width:1px;height:33px;background:#d1c4e9;"></div><div class="b" style="left:1554px;top:447px;width:1px;height:33px;background:#d1c4e9;"></div><div class="b" style="left:2274px;top:447px;width:1px;height:33px;background:#d1c4e9;"></div><div class="b" style="left:186px;top:483px;width:1px;height:50px;background:#d1c4e9;"></div><div class="b" style="left:414px;top:483px;width:1px;height:50px;background:#d1c4e9;"></div><div class="b" style="left:834px;top:483px;width:1px;height:50px;background:#d1c4e9;"></div><div class="b" style="left:978px;top:483px;width:1px;height:50px;background:#d1c4e9;"></div><div class="b" style="left:1122px;top:483px;width:1px;height:50px;background:#d1c4e9;"></div><div class="b" style="left:1266px;top:483px;width:1px;height:50px;background:#d1c4e9;"></div><div class="b" style="left:1410px;top:483px;width:1px;height:50px;background:#d1c4e9;"></div><div class="b" style="left:1554px;top:483px;width:1px;height:50px;background:#d1c4e9;"></div><div class="b" style="left:1698px;top:483px;width:1px;height:50px;background:#d1c4e9;"></div><div class="b" style="left:1842px;top:483px;width:1px;height:50px;background:#d1c4e9;"></div><div class="b" style="left:1986px;top:483px;width:1px;height:50px;background:#d1c4e9;"></div><div class="b" style="left:2130px;top:483px;width:1px;height:50px;background:#d1c4e9;"></div><div class="b" style="left:2274px;top:483px;width:1px;height:50px;background:#d1c4e9;"></div><div class="b" style="left:186px;top:536px;width:1px;height:33px;background:#d1c4e9;"></div><div class="b" style="left:414px;top:536px;width:1px;height:33px;background:#d1c4e9;"></div><div class="b" style="left:834px;top:536px;width:1px;height:33px;background:#d1c4e9;"></div><div class="b" style="left:978px;top:536px;width:1px;height:33px;background:#d1c4e9;"></div><div class="b" style="left:1122px;top:536px;width:1px;height:33px;background:#d1c4e9;"></div><div class="b" style="left:1266px;top:536px;width:1px;height:33px;background:#d1c4e9;"></div><div class="b" style="left:1410px;top:536px;width:1px;height:33px;background:#d1c4e9;"></div><div class="b" style="left:1554px;top:536px;width:1px;height:33px;background:#d1c4e9;"></div><div class="b" style="left:1698px;top:536px;width:1px;height:33px;background:#d1c4e9;"></div><div class="b" style="left:1842px;top:536px;width:1px;height:33px;background:#d1c4e9;"></div><div class="b" style="left:1986px;top:536px;width:1px;height:33px;background:#d1c4e9;"></div><div class="b" style="left:2130px;top:536px;width:1px;height:33px;background:#d1c4e9;"></div><div class="b" style="left:2274px;top:536px;width:1px;height:33px;background:#d1c4e9;"></div><div class="b" style="left:186px;top:572px;width:1px;height:33px;background:#d1c4e9;"></div><div class="b" style="left:414px;top:572px;width:1px;height:33px;background:#d1c4e9;"></div><div class="b" style="left:834px;top:572px;width:1px;height:33px;background:#d1c4e9;"></div><div class="b" style="left:1554px;top:572px;width:1px;height:33px;background:#d1c4e9;"></div><div class="b" style="left:2274px;top:572px;width:1px;height:33px;background:#d1c4e9;"></div><div class="b" style="left:186px;top:608px;width:1px;height:33px;background:#d1c4e9;"></div><div class="b" style="left:414px;top:608px;width:1px;height:33px;background:#d1c4e9;"></div><div class="b" style="left:834px;top:608px;width:1px;height:33px;background:#d1c4e9;"></div><div class="b" style="left:978px;top:608px;width:1px;height:33px;background:#d1c4e9;"></div><div class="b" style="left:1122px;top:608px;width:1px;height:33px;background:#d1c4e9;"></div><div class="b" style="left:1266px;top:608px;width:1px;height:33px;background:#d1c4e9;"></div><div class="b" style="left:1410px;top:608px;width:1px;height:33px;background:#d1c4e9;"></div><div class="b" style="left:1554px;top:608px;width:1px;height:33px;background:#d1c4e9;"></div><div class="b" style="left:1698px;top:608px;width:1px;height:33px;background:#d1c4e9;"></div><div class="b" style="left:1842px;top:608px;width:1px;height:33px;background:#d1c4e9;"></div><div class="b" style="left:1986px;top:608px;width:1px;height:33px;background:#d1c4e9;"></div><div class="b" style="left:2130px;top:608px;width:1px;height:33px;background:#d1c4e9;"></div><div class="b" style="left:2274px;top:608px;width:1px;height:33px;background:#d1c4e9;"></div><div class="b" style="left:186px;top:644px;width:1px;height:33px;background:#d1c4e9;"></div><div class="b" style="left:414px;top:644px;width:1px;height:33px;background:#d1c4e9;"></div><div class="b" style="left:834px;top:644px;width:1px;height:33px;background:#d1c4e9;"></div><div class="b" style="left:978px;top:644px;width:1px;height:33px;background:#d1c4e9;"></div><div class="b" style="left:1122px;top:644px;width:1px;height:33px;background:#d1c4e9;"></div><div class="b" style="left:1266px;top:644px;width:1px;height:33px;background:#d1c4e9;"></div><div class="b" style="left:1410px;top:644px;width:1px;height:33px;background:#d1c4e9;"></div><div class="b" style="left:1554px;top:644px;width:1px;height:33px;background:#d1c4e9;"></div><div class="b" style="left:1698px;top:644px;width:1px;height:33px;background:#d1c4e9;"></div><div class="b" style="left:1842px;top:644px;width:1px;height:33px;background:#d1c4e9;"></div><div class="b" style="left:1986px;top:644px;width:1px;height:33px;background:#d1c4e9;"></div><div class="b" style="left:2130px;top:644px;width:1px;height:33px;background:#d1c4e9;"></div><div class="b" style="left:2274px;top:644px;width:1px;height:33px;background:#d1c4e9;"></div><div class="b" style="left:186px;top:680px;width:1px;height:50px;background:#d1c4e9;"></div><div class="b" style="left:414px;top:680px;width:1px;height:50px;background:#d1c4e9;"></div><div class="b" style="left:834px;top:680px;width:1px;height:50px;background:#d1c4e9;"></div><div class="b" style="left:1554px;top:680px;width:1px;height:50px;background:#d1c4e9;"></div><div class="b" style="left:2274px;top:680px;width:1px;height:50px;background:#d1c4e9;"></div><div class="b" style="left:186px;top:733px;width:1px;height:33px;background:#d1c4e9;"></div><div class="b" style="left:414px;top:733px;width:1px;height:33px;background:#d1c4e9;"></div><div class="b" style="left:834px;top:733px;width:1px;height:33px;background:#d1c4e9;"></div><div class="b" style="left:978px;top:733px;width:1px;height:33px;background:#d1c4e9;"></div><div class="b" style="left:1122px;top:733px;width:1px;height:33px;background:#d1c4e9;"></div><div class="b" style="left:1266px;top:733px;width:1px;height:33px;background:#d1c4e9;"></div><div class="b" style="left:1410px;top:733px;width:1px;height:33px;background:#d1c4e9;"></div><div class="b" style="left:1554px;top:733px;width:1px;height:33px;background:#d1c4e9;"></div><div class="b" style="left:1698px;top:733px;width:1px;height:33px;background:#d1c4e9;"></div><div class="b" style="left:1842px;top:733px;width:1px;height:33px;background:#d1c4e9;"></div><div class="b" style="left:1986px;top:733px;width:1px;height:33px;background:#d1c4e9;"></div><div class="b" style="left:2130px;top:733px;width:1px;height:33px;background:#d1c4e9;"></div><div class="b" style="left:2274px;top:733px;width:1px;height:33px;background:#d1c4e9;"></div><div class="b" style="left:186px;top:769px;width:1px;height:33px;background:#d1c4e9;"></div><div class="b" style="left:414px;top:769px;width:1px;height:33px;background:#d1c4e9;"></div><div class="b" style="left:834px;top:769px;width:1px;height:33px;background:#d1c4e9;"></div><div class="b" style="left:978px;top:769px;width:1px;height:33px;background:#d1c4e9;"></div><div class="b" style="left:1122px;top:769px;width:1px;height:33px;background:#d1c4e9;"></div><div class="b" style="left:1266px;top:769px;width:1px;height:33px;background:#d1c4e9;"></div><div class="b" style="left:1410px;top:769px;width:1px;height:33px;background:#d1c4e9;"></div><div class="b" style="left:1554px;top:769px;width:1px;height:33px;background:#d1c4e9;"></div><div class="b" style="left:1698px;top:769px;width:1px;height:33px;background:#d1c4e9;"></div><div class="b" style="left:1842px;top:769px;width:1px;height:33px;background:#d1c4e9;"></div><div class="b" style="left:1986px;top:769px;width:1px;height:33px;background:#d1c4e9;"></div><div class="b" style="left:2130px;top:769px;width:1px;height:33px;background:#d1c4e9;"></div><div class="b" style="left:2274px;top:769px;width:1px;height:33px;background:#d1c4e9;"></div><div class="b" style="left:186px;top:805px;width:1px;height:33px;background:#d1c4e9;"></div><div class="b" style="left:414px;top:805px;width:1px;height:33px;background:#d1c4e9;"></div><div class="b" style="left:834px;top:805px;width:1px;height:33px;background:#d1c4e9;"></div><div class="b" style="left:1554px;top:805px;width:1px;height:33px;background:#d1c4e9;"></div><div class="b" style="left:2274px;top:805px;width:1px;height:33px;background:#d1c4e9;"></div><div class="b" style="left:186px;top:841px;width:1px;height:33px;background:#d1c4e9;"></div><div class="b" style="left:414px;top:841px;width:1px;height:33px;background:#d1c4e9;"></div><div class="b" style="left:834px;top:841px;width:1px;height:33px;background:#d1c4e9;"></div><div class="b" style="left:978px;top:841px;width:1px;height:33px;background:#d1c4e9;"></div><div class="b" style="left:1122px;top:841px;width:1px;height:33px;background:#d1c4e9;"></div><div class="b" style="left:1266px;top:841px;width:1px;height:33px;background:#d1c4e9;"></div><div class="b" style="left:1410px;top:841px;width:1px;height:33px;background:#d1c4e9;"></div><div class="b" style="left:1554px;top:841px;width:1px;height:33px;background:#d1c4e9;"></div><div class="b" style="left:1698px;top:841px;width:1px;height:33px;background:#d1c4e9;"></div><div class="b" style="left:1842px;top:841px;width:1px;height:33px;background:#d1c4e9;"></div><div class="b" style="left:1986px;top:841px;width:1px;height:33px;background:#d1c4e9;"></div><div class="b" style="left:2130px;top:841px;width:1px;height:33px;background:#d1c4e9;"></div><div class="b" style="left:2274px;top:841px;width:1px;height:33px;background:#d1c4e9;"></div><div class="b" style="left:186px;top:877px;width:1px;height:50px;background:#d1c4e9;"></div><div class="b" style="left:414px;top:877px;width:1px;height:50px;background:#d1c4e9;"></div><div class="b" style="left:834px;top:877px;width:1px;height:50px;background:#d1c4e9;"></div><div class="b" style="left:1554px;top:877px;width:1px;height:50px;background:#d1c4e9;"></div><div class="b" style="left:2274px;top:877px;width:1px;height:50px;background:#d1c4e9;"></div><div class="b" style="left:186px;top:930px;width:1px;height:33px;background:#d1c4e9;"></div><div class="b" style="left:414px;top:930px;width:1px;height:33px;background:#d1c4e9;"></div><div class="b" style="left:834px;top:930px;width:1px;height:33px;background:#d1c4e9;"></div><div class="b" style="left:978px;top:930px;width:1px;height:33px;background:#d1c4e9;"></div><div class="b" style="left:1122px;top:930px;width:1px;height:33px;background:#d1c4e9;"></div><div class="b" style="left:1266px;top:930px;width:1px;height:33px;background:#d1c4e9;"></div><div class="b" style="left:1410px;top:930px;width:1px;height:33px;background:#d1c4e9;"></div><div class="b" style="left:1554px;top:930px;width:1px;height:33px;background:#d1c4e9;"></div><div class="b" style="left:1698px;top:930px;width:1px;height:33px;background:#d1c4e9;"></div><div class="b" style="left:1842px;top:930px;width:1px;height:33px;background:#d1c4e9;"></div><div class="b" style="left:1986px;top:930px;width:1px;height:33px;background:#d1c4e9;"></div><div class="b" style="left:2130px;top:930px;width:1px;height:33px;background:#d1c4e9;"></div><div class="b" style="left:2274px;top:930px;width:1px;height:33px;background:#d1c4e9;"></div><div class="b" style="left:186px;top:966px;width:1px;height:71px;background:#d1c4e9;"></div><div class="b" style="left:414px;top:966px;width:1px;height:71px;background:#d1c4e9;"></div><div class="b" style="left:834px;top:966px;width:1px;height:71px;background:#d1c4e9;"></div><div class="b" style="left:1554px;top:966px;width:1px;height:71px;background:#d1c4e9;"></div><div class="b" style="left:2274px;top:966px;width:1px;height:71px;background:#d1c4e9;"></div><div class="b" style="left:186px;top:1040px;width:1px;height:33px;background:#d1c4e9;"></div><div class="b" style="left:414px;top:1040px;width:1px;height:33px;background:#d1c4e9;"></div><div class="b" style="left:834px;top:1040px;width:1px;height:33px;background:#d1c4e9;"></div><div class="b" style="left:978px;top:1040px;width:1px;height:33px;background:#d1c4e9;"></div><div class="b" style="left:1122px;top:1040px;width:1px;height:33px;background:#d1c4e9;"></div><div class="b" style="left:1266px;top:1040px;width:1px;height:33px;background:#d1c4e9;"></div><div class="b" style="left:1410px;top:1040px;width:1px;height:33px;background:#d1c4e9;"></div><div class="b" style="left:1554px;top:1040px;width:1px;height:33px;background:#d1c4e9;"></div><div class="b" style="left:1698px;top:1040px;width:1px;height:33px;background:#d1c4e9;"></div><div class="b" style="left:1842px;top:1040px;width:1px;height:33px;background:#d1c4e9;"></div><div class="b" style="left:1986px;top:1040px;width:1px;height:33px;background:#d1c4e9;"></div><div class="b" style="left:2130px;top:1040px;width:1px;height:33px;background:#d1c4e9;"></div><div class="b" style="left:2274px;top:1040px;width:1px;height:33px;background:#d1c4e9;"></div><div class="b" style="left:186px;top:1076px;width:1px;height:50px;background:#d1c4e9;"></div><div class="b" style="left:414px;top:1076px;width:1px;height:50px;background:#d1c4e9;"></div><div class="b" style="left:834px;top:1076px;width:1px;height:50px;background:#d1c4e9;"></div><div class="b" style="left:1554px;top:1076px;width:1px;height:50px;background:#d1c4e9;"></div><div class="b" style="left:2274px;top:1076px;width:1px;height:50px;background:#d1c4e9;"></div><div class="b" style="left:186px;top:1129px;width:1px;height:33px;background:#d1c4e9;"></div><div class="b" style="left:414px;top:1129px;width:1px;height:33px;background:#d1c4e9;"></div><div class="b" style="left:834px;top:1129px;width:1px;height:33px;background:#d1c4e9;"></div><div class="b" style="left:978px;top:1129px;width:1px;height:33px;background:#d1c4e9;"></div><div class="b" style="left:1122px;top:1129px;width:1px;height:33px;background:#d1c4e9;"></div><div class="b" style="left:1266px;top:1129px;width:1px;height:33px;background:#d1c4e9;"></div><div class="b" style="left:1410px;top:1129px;width:1px;height:33px;background:#d1c4e9;"></div><div class="b" style="left:1554px;top:1129px;width:1px;height:33px;background:#d1c4e9;"></div><div class="b" style="left:1698px;top:1129px;width:1px;height:33px;background:#d1c4e9;"></div><div class="b" style="left:1842px;top:1129px;width:1px;height:33px;background:#d1c4e9;"></div><div class="b" style="left:1986px;top:1129px;width:1px;height:33px;background:#d1c4e9;"></div><div class="b" style="left:2130px;top:1129px;width:1px;height:33px;background:#d1c4e9;"></div><div class="b" style="left:2274px;top:1129px;width:1px;height:33px;background:#d1c4e9;"></div><div class="b" style="left:186px;top:1165px;width:1px;height:30px;background:#d1c4e9;"></div><div class="b" style="left:414px;top:1165px;width:1px;height:30px;background:#d1c4e9;"></div><div class="b" style="left:834px;top:1165px;width:1px;height:30px;background:#d1c4e9;"></div><div class="b" style="left:978px;top:1165px;width:1px;height:30px;background:#d1c4e9;"></div><div class="b" style="left:1122px;top:1165px;width:1px;height:30px;background:#d1c4e9;"></div><div class="b" style="left:1266px;top:1165px;width:1px;height:30px;background:#d1c4e9;"></div><div class="b" style="left:1410px;top:1165px;width:1px;height:30px;background:#d1c4e9;"></div><div class="b" style="left:1554px;top:1165px;width:1px;height:30px;background:#d1c4e9;"></div><div class="b" style="left:1698px;top:1165px;width:1px;height:30px;background:#d1c4e9;"></div><div class="b" style="left:1842px;top:1165px;width:1px;height:30px;background:#d1c4e9;"></div><div class="b" style="left:1986px;top:1165px;width:1px;height:30px;background:#d1c4e9;"></div><div class="b" style="left:2130px;top:1165px;width:1px;height:30px;background:#d1c4e9;"></div><div class="b" style="left:2274px;top:1165px;width:1px;height:30px;background:#d1c4e9;"></div><div class="b" style="left:415px;top:607px;width:420px;height:35px;border:1px solid #000;"></div><div class="b" style="left:2516px;top:446px;width:9px;height:353px;background:#a795d3;border-radius:4.5px;"></div></div>
<div class="b" style="left:2526px;top:293px;width:34px;height:1px;background:#d1c4e9;"></div>
<div class="b" style="left:2526px;top:509px;width:34px;height:1px;background:#d1c4e9;"></div>
<span class="t" style="left:2557.5px;top:317.6px;font-size:17.33px;line-height:22px;font-weight:700;color:#000;letter-spacing:-0.22px;transform-origin:0 0;transform:rotate(90deg);">Список начислений</span>
<div class="b" style="left:51px;top:1196px;width:300px;height:6px;background:#ffa000;"></div>
<div class="b" style="left:51px;top:1202px;width:300px;height:39px;background:#ffecb3;"></div>
<svg class="b" style="left:80px;top:1200px;" width="270" height="40" viewBox="80 1200 270 40"><rect x="87.1" y="1212" width="9.7" height="19.8" fill="#e6b566"/><rect x="88.8" y="1214.2" width="2.3" height="2.4" fill="#ffecb3"/><rect x="93.0" y="1214.2" width="2.3" height="2.4" fill="#ffecb3"/><rect x="88.8" y="1218.5" width="2.3" height="2.4" fill="#ffecb3"/><rect x="93.0" y="1218.5" width="2.3" height="2.4" fill="#ffecb3"/><rect x="88.8" y="1222.8" width="2.3" height="2.4" fill="#ffecb3"/><rect x="93.0" y="1222.8" width="2.3" height="2.4" fill="#ffecb3"/><rect x="89.8" y="1228" width="4.2" height="2.8" fill="#ffecb3"/><rect x="98.2" y="1206" width="14.9" height="25.8" fill="#512da8"/><rect x="100.1" y="1208.2" width="2.6" height="2.5" fill="#ffecb3"/><rect x="104.3" y="1208.2" width="2.6" height="2.5" fill="#ffecb3"/><rect x="108.6" y="1208.2" width="2.6" height="2.5" fill="#ffecb3"/><rect x="100.1" y="1212.6" width="2.6" height="2.5" fill="#ffecb3"/><rect x="104.3" y="1212.6" width="2.6" height="2.5" fill="#ffecb3"/><rect x="108.6" y="1212.6" width="2.6" height="2.5" fill="#ffecb3"/><rect x="100.1" y="1217" width="2.6" height="2.5" fill="#ffecb3"/><rect x="104.3" y="1217" width="2.6" height="2.5" fill="#ffecb3"/><rect x="108.6" y="1217" width="2.6" height="2.5" fill="#ffecb3"/><rect x="100.1" y="1221.2" width="2.6" height="2.5" fill="#ffecb3"/><rect x="104.3" y="1221.2" width="2.6" height="2.5" fill="#ffecb3"/><rect x="108.6" y="1221.2" width="2.6" height="2.5" fill="#ffecb3"/><rect x="103.4" y="1226.4" width="4.4" height="3.4" fill="#ffecb3"/><path d="M325.4 1212 L339.2 1225.8 M339.2 1212 L325.4 1225.8" stroke="#111" stroke-width="1.7" fill="none"/></svg>
<span class="t" style="left:122.40px;top:1207px;font-size:20px;line-height:25px;font-weight:700;letter-spacing:-0.412px;">Сводный сметны…</span>
<div class="b" style="left:1913px;top:1197px;width:1px;height:40px;background:#e0e0e0;"></div>
<span class="t" style="left:1932.00px;top:1206px;font-size:20px;line-height:25px;font-weight:700;letter-spacing:-0.337px;">Всего</span>
<span class="t" style="left:2015.50px;top:1207px;font-size:20px;line-height:25px;letter-spacing:0.220px;">Б: 12 399,82 тыс. р.</span>
<span class="t" style="left:2228.20px;top:1207px;font-size:20px;line-height:25px;letter-spacing:0.257px;">Т: 160 460,44 тыс. р.</span>
<svg class="b" style="left:38px;top:596px;" width="58" height="54" viewBox="38 596 58 54"><rect x="42" y="599.8" width="48.9" height="45.2" fill="none" stroke="#ff0000" stroke-width="3.2"/></svg>
<svg class="b" style="left:55px;top:610px;" width="18" height="22" viewBox="55 610 18 22"><path d="M65.8 611.9 L57.9 621.9 H63 L61.3 628.2 L69.7 618.2 H64.6 Z" fill="#cb4a2f" stroke="#cb4a2f" stroke-width="0.5" stroke-linejoin="round"/></svg>
<div class="b" style="left:34px;top:650px;width:375px;height:84px;background:rgba(98,98,100,0.92);border-radius:6px;"></div>
<span class="t" style="left:46.00px;top:659px;font-size:17.33px;line-height:22px;color:#fff;letter-spacing:0.528px;-webkit-text-stroke:0.3px #fff;">Строка изменена вручную. Для возврата</span>
<span class="t" style="left:46.00px;top:681px;font-size:17.33px;line-height:22px;color:#fff;letter-spacing:0.504px;-webkit-text-stroke:0.3px #fff;">к исходным значениям, обновите или</span>
<span class="t" style="left:46.00px;top:703px;font-size:17.33px;line-height:22px;color:#fff;letter-spacing:0.496px;-webkit-text-stroke:0.3px #fff;">синхронизируйте данные</span>
<div class="b" style="left:2526px;top:1195px;width:34px;height:1px;background:#d1c4e9;"></div>
</body></html>
